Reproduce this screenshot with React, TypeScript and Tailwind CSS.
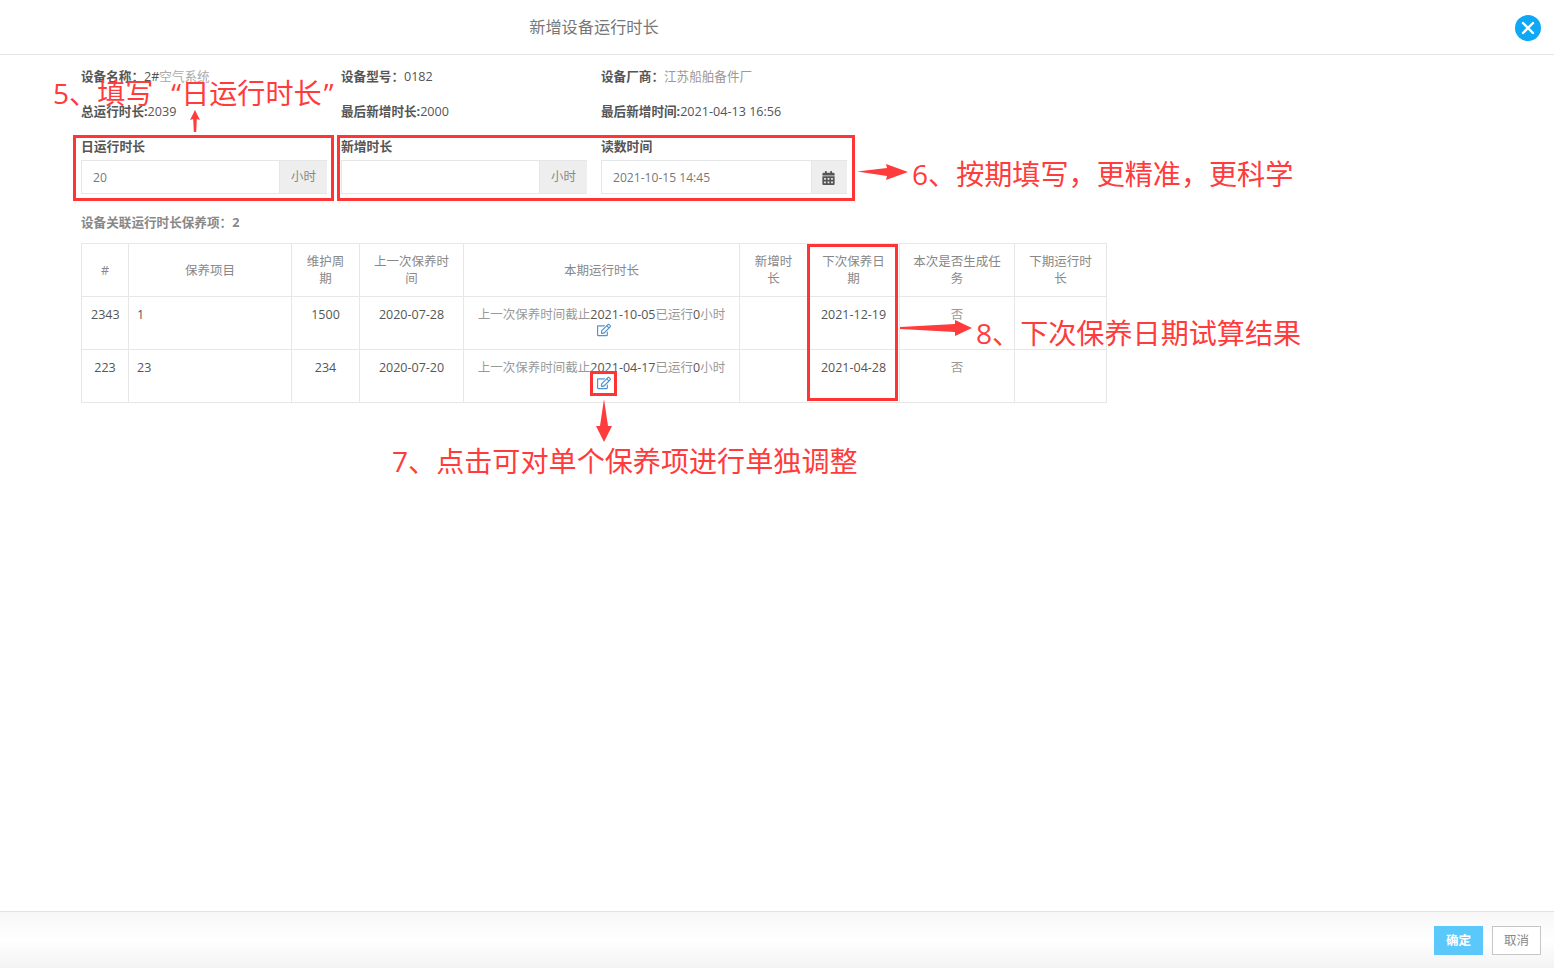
import { FaRegEdit, FaCalendarAlt } from "react-icons/fa";

const FONT = '"Open Sans","Noto Sans CJK SC","Noto Sans",sans-serif';
const CN_COLON = "\uFF1A";
const CN_COMMA = "\uFF0C";
const widths = [47, 163, 68, 104, 276, 68, 92, 115, 92];
const heads = ["#", "保养项目", "维护周期", "上一次保养时间", "本期运行时长", "新增时长", "下次保养日期", "本次是否生成任务", "下期运行时长"];

function Gray({ children }: { children: React.ReactNode }) {
  return <span className="text-[#999]">{children}</span>;
}

function Info({ label, children }: { label: string; children: React.ReactNode }) {
  return (
    <div className="h-[35px] flex items-center text-[12.6px] text-[#555] whitespace-pre">
      <span className="font-bold text-[#555]">{label}</span>
      {children}
    </div>
  );
}

function Field({ label, value, addon, wide = true }: { label: string; value?: string; addon: React.ReactNode; wide?: boolean }) {
  return (
    <div className="w-[246px]">
      <div className="h-[17px] mb-[5px] text-[12.8px] leading-[17px] font-semibold text-[#555]">{label}</div>
      <div className="flex h-[34px] border border-[#e5e6e7] bg-white">
        <div className="flex-1 pl-[11px] pt-[2px] flex items-center text-[12.1px] text-[#777]">{value}</div>
        <div className={`${wide ? "w-[48px]" : "w-[36px]"} -mr-px pt-px bg-[#eeeeee] border-l border-[#e5e6e7] flex items-center justify-center text-[12.5px] text-[#888]`}>{addon}</div>
      </div>
    </div>
  );
}

function Row({ id, item, cycle, last, until, next }: { id: string; item: string; cycle: string; last: string; until: string; next: string }) {
  const td = "border border-[#e7e7e7] px-[9px] pt-[9px] pb-0 align-top text-center leading-[17px]";
  return (
    <tr className="h-[53px]">
      <td className={td}>{id}</td>
      <td className={`${td} !text-left !pl-[8px]`}>{item}</td>
      <td className={td}>{cycle}</td>
      <td className={td}>{last}</td>
      <td className={td}>
        <Gray>上一次保养时间截止</Gray>{until}<Gray>已运行</Gray>0<Gray>小时</Gray>
        <div className="h-[13px] pl-[4px] flex items-center justify-center text-[#4f93ce]"><FaRegEdit className="w-[14px] h-[14px]" /></div>
      </td>
      <td className={td}></td>
      <td className={td}>{next}</td>
      <td className={`${td} text-[#999]`}>否</td>
      <td className={td}></td>
    </tr>
  );
}

function Note({ className, children }: { className: string; children: React.ReactNode }) {
  return <div className={`absolute text-[28.1px] leading-[36px] text-[#ff3b3b] whitespace-pre ${className}`}>{children}</div>;
}

function Box({ className }: { className: string }) {
  return <div className={`absolute border-[3px] border-[#ff3535] ${className}`} />;
}

function Arrow({ className, w, h, points }: { className: string; w: number; h: number; points: string }) {
  return (
    <svg className={`absolute ${className}`} width={w} height={h} viewBox={`0 0 ${w} ${h}`}>
      <polygon points={points} fill="#ff3b3b" />
    </svg>
  );
}

export default function App() {
  return (
    <div className="relative w-[1554px] h-[968px] bg-white overflow-hidden flex flex-col" style={{ fontFamily: FONT }}>
      <header className="h-[55px] shrink-0 border-b border-[#e5e5e5] flex items-center pt-px relative">
        <div className="w-[1188px] text-center text-[16.2px] text-[#777]">新增设备运行时长</div>
        <button className="absolute right-[13px] top-[15px] w-[26px] h-[26px] rounded-full bg-[#0fa8f5] flex items-center justify-center">
          <svg width="14" height="14" viewBox="0 0 14 14"><path d="M2 2 L12 12 M12 2 L2 12" stroke="#fff" strokeWidth="2.4" strokeLinecap="round" /></svg>
        </button>
      </header>

      <main className="flex-1 pt-[5px] pl-[81px]">
        <div className="grid grid-cols-[260px_260px_260px] w-[780px]">
          <Info label={`设备名称${CN_COLON}`}>2#<span className="text-[#aaa]">空气系统</span></Info>
          <Info label={`设备型号${CN_COLON}`}>0182</Info>
          <Info label={`设备厂商${CN_COLON}`}><Gray>江苏船舶备件厂</Gray></Info>
          <Info label="总运行时长:">2039</Info>
          <Info label="最后新增时长:">2000</Info>
          <Info label="最后新增时间:">2021-04-13 16:56</Info>
        </div>
        <div className="grid grid-cols-[260px_260px_260px] w-[780px] mt-[8px]">
          <Field label="日运行时长" value="20" addon="小时" />
          <Field label="新增时长" addon="小时" />
          <Field label="读数时间" value="2021-10-15 14:45" wide={false} addon={<FaCalendarAlt className="w-[13px] h-[14px] mr-[2px] text-[#555]" />} />
        </div>
        <div className="mt-[20px] h-[17px] text-[12.6px] leading-[17px] font-bold text-[#888]">{`设备关联运行时长保养项${CN_COLON}2`}</div>
        <table className="mt-[12px] w-[1025px] table-fixed border-collapse text-[12.5px] text-[#555]">
          <colgroup>
            {widths.map((w, i) => <col key={i} style={{ width: w }} />)}
          </colgroup>
          <thead>
            <tr className="h-[53px]">
              {heads.map((h) => (
                <th key={h} className="border border-[#e7e7e7] px-[9px] py-0 align-middle font-normal leading-[17px] text-[#888] text-center">{h}</th>
              ))}
            </tr>
          </thead>
          <tbody>
            <Row id="2343" item="1" cycle="1500" last="2020-07-28" until="2021-10-05" next="2021-12-19" />
            <Row id="223" item="23" cycle="234" last="2020-07-20" until="2021-04-17" next="2021-04-28" />
          </tbody>
        </table>
      </main>

      <footer className="h-[57px] shrink-0 border-t border-[#e3e3e3] bg-gradient-to-b from-[#f7f7f7] via-white to-[#f3f3f3] flex items-start justify-end gap-[9px] pt-[14px] pr-[13px]">
        <button className="w-[49px] h-[29px] pt-px bg-[#5bc8fb] text-white text-[12.5px] font-semibold">确定</button>
        <button className="w-[49px] h-[29px] pt-px border border-[#c6c6c6] bg-white text-[#888] text-[12.5px]">取消</button>
      </footer>

      <Box className="left-[73px] top-[135px] w-[261px] h-[66px]" />
      <Box className="left-[337px] top-[135px] w-[518px] h-[66px]" />
      <Box className="left-[807px] top-[244px] w-[91px] h-[157px]" />
      <Box className="left-[590px] top-[371px] w-[27px] h-[25px]" />

      <Note className="left-[53px] top-[75px]">5、填写<span className="ml-[18px]">“日运行时长<span className="ml-[2px]">”</span></span></Note>
      <Note className="left-[912px] top-[156px]">{`6、按期填写${CN_COMMA}更精准${CN_COMMA}更科学`}</Note>
      <Note className="left-[392px] top-[443px]">7、点击可对单个保养项进行单独调整</Note>
      <Note className="left-[976px] top-[315px]">8、下次保养日期试算结果</Note>

      <Arrow className="left-[189px] top-[110px]" w={12} h={22} points="6,0 11,10 7.8,9 7.2,22 4.8,22 4.2,9 1,10" />
      <Arrow className="left-[857px] top-[164px]" w={52} h={16} points="0,7.5 30,4 29,0 51,8 29,16 30,12" />
      <Arrow className="left-[900px] top-[320px]" w={72} h={17} points="0,7 55,4 55,0 72,8 55,16 55,12 0,9" />
      <Arrow className="left-[596px] top-[399px]" w={16} h={43} points="8,0 12,27 16,27 8,43 0,27 4,27" />
    </div>
  );
}
